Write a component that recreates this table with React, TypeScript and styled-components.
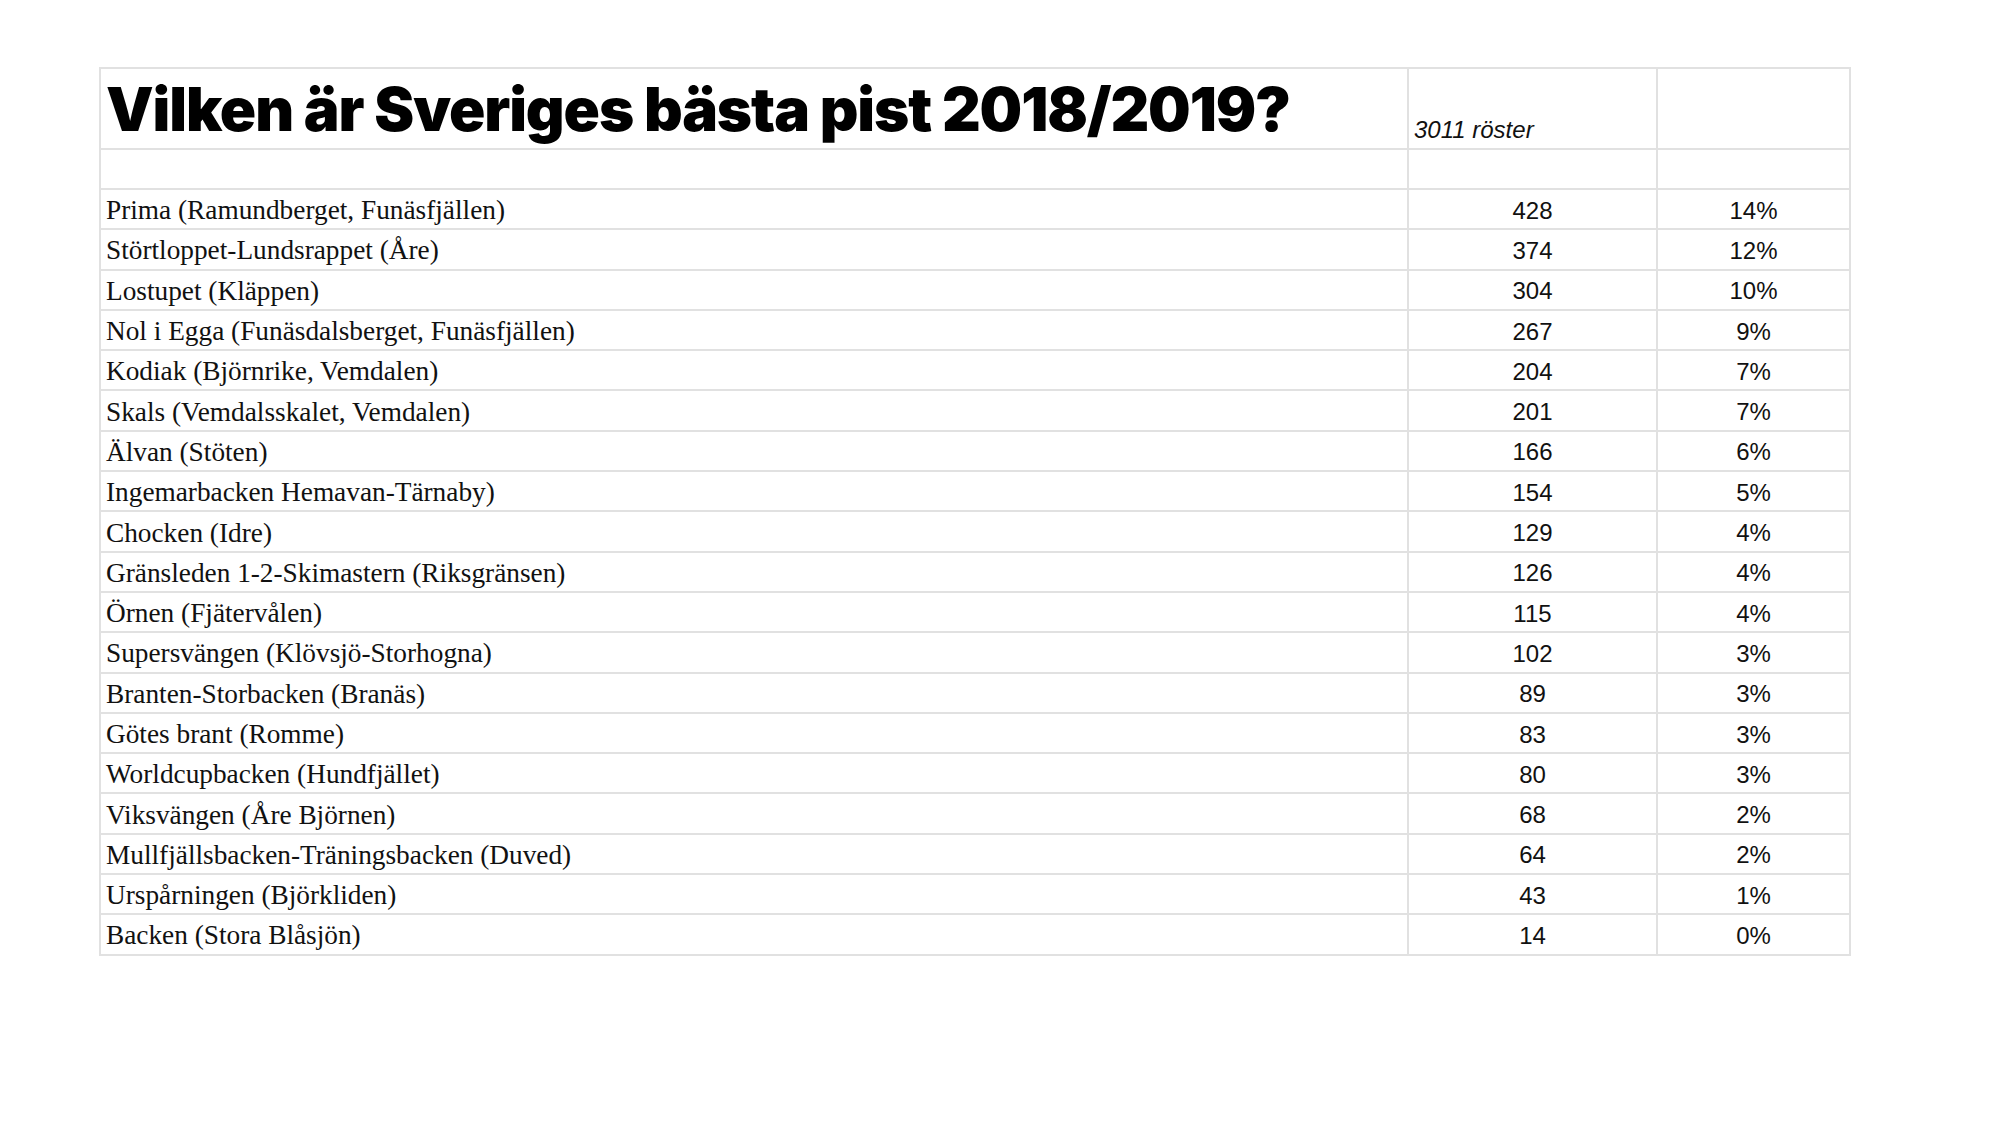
import styled, { createGlobalStyle } from "styled-components";

const GlobalStyle = createGlobalStyle`
  html, body {
    margin: 0;
    padding: 0;
    background: #ffffff;
  }
`;

const Page = styled.div`
  width: 2000px;
  height: 1125px;
  padding: 67px 0 0 99px;
  box-sizing: border-box;
  background: #ffffff;
`;

const Table = styled.table`
  border-collapse: collapse;
  table-layout: fixed;
  width: 1750px;
  color: #111111;
`;

const Cell = styled.td<{ $align?: "left" | "center" }>`
  border: 2px solid #e1e1e1;
  padding: 0 5px;
  text-align: ${(p) => p.$align ?? "left"};
  vertical-align: middle;
  white-space: nowrap;
  overflow: hidden;
`;

const TitleRow = styled.tr`
  height: 81px;
`;

const SpacerRow = styled.tr`
  height: 40px;
`;

const DataRow = styled.tr`
  height: 40.3px;
`;

const Title = styled(Cell)`
  font-family: Inter, "Liberation Sans", sans-serif;
  font-weight: 900;
  font-size: 60px;
  letter-spacing: -1.1px;
  padding-left: 5px;
  color: #000000;
`;

const Votes = styled(Cell)`
  font-family: "Liberation Sans", Arial, sans-serif;
  font-style: italic;
  font-size: 24px;
  vertical-align: bottom;
  padding-bottom: 4px;
`;

const Name = styled(Cell)`
  font-family: "Liberation Serif", "Times New Roman", serif;
  font-size: 27.3px;
  padding-top: 3px;
`;

const Num = styled(Cell)`
  font-family: "Liberation Sans", Arial, sans-serif;
  font-size: 24px;
  padding-top: 3px;
`;

const rows: [string, number][] = [
  ["Prima (Ramundberget, Funäsfjällen)", 428],
  ["Störtloppet-Lundsrappet (Åre)", 374],
  ["Lostupet (Kläppen)", 304],
  ["Nol i Egga (Funäsdalsberget, Funäsfjällen)", 267],
  ["Kodiak (Björnrike, Vemdalen)", 204],
  ["Skals (Vemdalsskalet, Vemdalen)", 201],
  ["Älvan (Stöten)", 166],
  ["Ingemarbacken Hemavan-Tärnaby)", 154],
  ["Chocken (Idre)", 129],
  ["Gränsleden 1-2-Skimastern (Riksgränsen)", 126],
  ["Örnen (Fjätervålen)", 115],
  ["Supersvängen (Klövsjö-Storhogna)", 102],
  ["Branten-Storbacken (Branäs)", 89],
  ["Götes brant (Romme)", 83],
  ["Worldcupbacken (Hundfjället)", 80],
  ["Viksvängen (Åre Björnen)", 68],
  ["Mullfjällsbacken-Träningsbacken (Duved)", 64],
  ["Urspårningen (Björkliden)", 43],
  ["Backen (Stora Blåsjön)", 14],
];

const TOTAL = 3011;

export default function App() {
  return (
    <>
      <GlobalStyle />
      <Page>
        <Table>
          <colgroup>
            <col style={{ width: 1308 }} />
            <col style={{ width: 249 }} />
            <col style={{ width: 193 }} />
          </colgroup>
          <tbody>
            <TitleRow>
              <Title>Vilken är Sveriges bästa pist 2018/2019?</Title>
              <Votes>{TOTAL} röster</Votes>
              <Cell />
            </TitleRow>
            <SpacerRow>
              <Cell />
              <Cell />
              <Cell />
            </SpacerRow>
            {rows.map(([name, votes]) => (
              <DataRow key={name}>
                <Name>{name}</Name>
                <Num $align="center">{votes}</Num>
                <Num $align="center">{Math.round((votes / TOTAL) * 100)}%</Num>
              </DataRow>
            ))}
          </tbody>
        </Table>
      </Page>
    </>
  );
}
